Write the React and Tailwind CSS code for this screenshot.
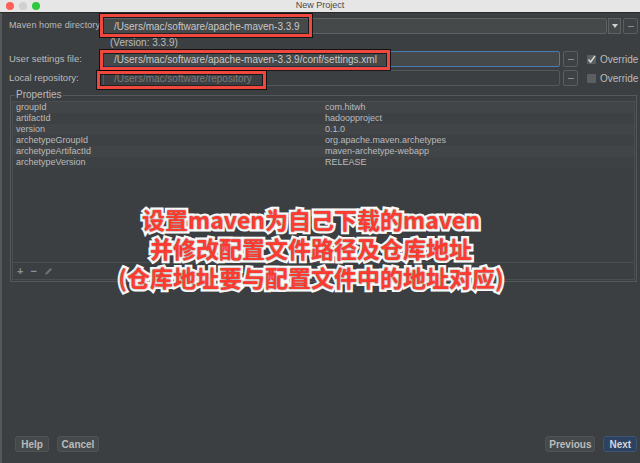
import React from 'react';

const props = [
  ['groupId', 'com.hitwh'],
  ['artifactId', 'hadoopproject'],
  ['version', '0.1.0'],
  ['archetypeGroupId', 'org.apache.maven.archetypes'],
  ['archetypeArtifactId', 'maven-archetype-webapp'],
  ['archetypeVersion', 'RELEASE'],
];

function Dots() {
  return (
    <div className="w-[15px] h-[16px] border border-[#5b5e60] rounded-[2px] bg-[#3f4244] flex items-center justify-center">
      <div className="w-[6px] h-px bg-[#8a8c8e]" />
    </div>
  );
}

function Highlight({ className }) {
  // red annotation rectangle drawn over the dialog
  return (
    <div
      className={
        'absolute border-[3px] border-[#f0473e] shadow-[0_0_0_1px_rgba(0,0,0,0.7),inset_0_0_0_1px_rgba(0,0,0,0.6)] pointer-events-none ' +
        className
      }
    />
  );
}

export default function App() {
  return (
    <div
      className="relative w-[640px] h-[463px] overflow-hidden bg-[#3c3f41] flex flex-col text-[#bbbbbb]"
      style={{ fontFamily: '"Liberation Sans", Arial, sans-serif' }}
    >
      {/* title bar */}
      <div className="h-[13px] bg-[#e6e6e6] border-b border-[#2b2b2b] flex items-center relative shrink-0">
        <div className="flex gap-[5px] pl-[6px]">
          <div className="w-[8px] h-[8px] rounded-full bg-[#fc5f57]" />
          <div className="w-[8px] h-[8px] rounded-full bg-[#d0d0d0]" />
          <div className="w-[8px] h-[8px] rounded-full bg-[#2bc840]" />
        </div>
        <div className="absolute inset-0 flex items-center justify-center text-[9px] text-[#4a4a4a]">New Project</div>
      </div>

      <div className="flex-1 flex border-l-2 border-[#56595b]">
        <div className="flex-1 flex flex-col pl-[7px] pr-[7px]">
          {/* maven home */}
          <div className="mt-[5px] h-[16px] flex items-center">
            <div className="w-[94px] shrink-0 text-[9px] tracking-[0.1px] whitespace-nowrap">Maven home directory</div>
            <div className="flex-1 h-[16px] bg-[#45494a] border border-[#5e6163] rounded-[2px] flex items-center pl-[10px] text-[10px] text-[#c8c8c8]">
              /Users/mac/software/apache-maven-3.3.9
            </div>
            <div className="w-[13px] h-[16px] ml-[1px] bg-[#45494a] border border-[#5e6163] flex items-center justify-center">
              <div className="w-0 h-0 border-l-[3px] border-r-[3px] border-t-[4px] border-l-transparent border-r-transparent border-t-[#d0d0d0]" />
            </div>
            <div className="ml-[2px]">
              <Dots />
            </div>
          </div>
          <div className="h-[16px] flex items-center pl-[101px] text-[10px]">(Version: 3.3.9)</div>

          {/* user settings */}
          <div className="mt-[1px] h-[16px] flex items-center">
            <div className="w-[94px] shrink-0 text-[9.5px] whitespace-nowrap">User settings file:</div>
            <div className="w-[457px] h-[16px] bg-[#45494a] border border-[#4a7bb5] rounded-[2px] flex items-center pl-[10px] text-[10px] text-[#c8c8c8]">
              /Users/mac/software/apache-maven-3.3.9/conf/settings.xml
            </div>
            <div className="ml-[3px]">
              <Dots />
            </div>
            <div className="ml-[9px] w-[9px] h-[9px] bg-[#5c5f61] rounded-[1px] flex items-center justify-center">
              <svg width="9" height="9" viewBox="0 0 9 9">
                <path d="M1.5 4.5 L3.6 7 L8 1" fill="none" stroke="#d8d8d8" strokeWidth="1.4" />
              </svg>
            </div>
            <div className="ml-[4px] text-[10px]">Override</div>
          </div>

          {/* local repository */}
          <div className="mt-[3px] h-[16px] flex items-center">
            <div className="w-[94px] shrink-0 text-[9.5px] whitespace-nowrap">Local repository:</div>
            <div className="w-[457px] h-[16px] bg-[#3c3f41] border border-[#555859] rounded-[2px] flex items-center pl-[10px] text-[10px] text-[#7a7c7e]">
              /Users/mac/software/repository
            </div>
            <div className="ml-[3px]">
              <Dots />
            </div>
            <div className="ml-[9px] w-[9px] h-[9px] bg-[#5c5f61] rounded-[1px]" />
            <div className="ml-[4px] text-[10px]">Override</div>
          </div>

          {/* properties group */}
          <div className="relative mt-[9px] ml-[1px] mr-[1px] h-[187px] border border-[#55585a] flex flex-col px-[1px] pt-[5px] pb-[1px]">
            <div className="absolute -top-[7px] left-[4px] px-[1px] bg-[#3c3f41] text-[10px] leading-[12px]">Properties</div>
            <div className="flex-1 border border-[#4b4e50] flex flex-col">
              {props.map(([k, v], i) => (
                <div
                  key={k}
                  className={
                    'h-[11px] flex items-center text-[9px] leading-[11px] ' +
                    (i % 2 === 0 ? 'bg-[#424547]' : 'bg-[#3e4143]')
                  }
                >
                  <div className="w-[311px] pl-[3px] whitespace-nowrap">{k}</div>
                  <div className="pl-[1px] whitespace-nowrap">{v}</div>
                </div>
              ))}
              <div className="flex-1" />
              <div className="h-[17px] border-t border-[#4b4e50] flex items-center gap-[7px] pl-[4px] text-[#8e9092]">
                <span className="text-[11px] font-bold leading-none">+</span>
                <span className="text-[11px] font-bold leading-none">−</span>
                <svg width="9" height="9" viewBox="0 0 9 9">
                  <path d="M1 8 L2 5.5 L6.5 1 L8 2.5 L3.5 7 Z" fill="#6f7173" />
                </svg>
              </div>
            </div>
          </div>

          <div className="flex-1" />

          {/* bottom buttons */}
          <div className="h-[16px] mb-[11px] flex items-center text-[10px] font-bold text-[#bbbbbb]">
            <div className="ml-[6px] w-[34px] h-[16px] rounded-[3px] bg-[#45494a] border border-[#505355] flex items-center justify-center">Help</div>
            <div className="ml-[8px] w-[42px] h-[16px] rounded-[3px] bg-[#45494a] border border-[#505355] flex items-center justify-center">Cancel</div>
            <div className="flex-1" />
            <div className="w-[50px] h-[16px] rounded-[3px] bg-[#45494a] border border-[#505355] flex items-center justify-center">Previous</div>
            <div className="ml-[8px] mr-[1px] w-[34px] h-[16px] rounded-[3px] bg-[#2d4260] border border-[#3b5375] flex items-center justify-center text-[#d0d6de]">Next</div>
          </div>
        </div>
      </div>

      {/* annotation boxes */}
      <Highlight className="left-[100px] top-[14px] w-[212px] h-[23px]" />
      <Highlight className="left-[100px] top-[50px] w-[290px] h-[20px]" />
      <Highlight className="left-[97px] top-[71px] w-[169px] h-[18px]" />

      {/* annotation text */}
      <div
        className="absolute left-0 right-[18px] top-[205px] flex flex-col items-center text-[23px] leading-[29px] font-bold text-[#ff3b2f] [paint-order:stroke_fill] [-webkit-text-stroke:5px_white] [text-shadow:0_0_2px_rgba(0,0,0,0.6)] whitespace-nowrap"
        style={{ fontFamily: '"Noto Sans CJK SC", "Liberation Sans", sans-serif' }}
      >
        <div>设置maven为自己下载的maven</div>
        <div>并修改配置文件路径及仓库地址</div>
        <div>(仓库地址要与配置文件中的地址对应)</div>
      </div>
    </div>
  );
}
